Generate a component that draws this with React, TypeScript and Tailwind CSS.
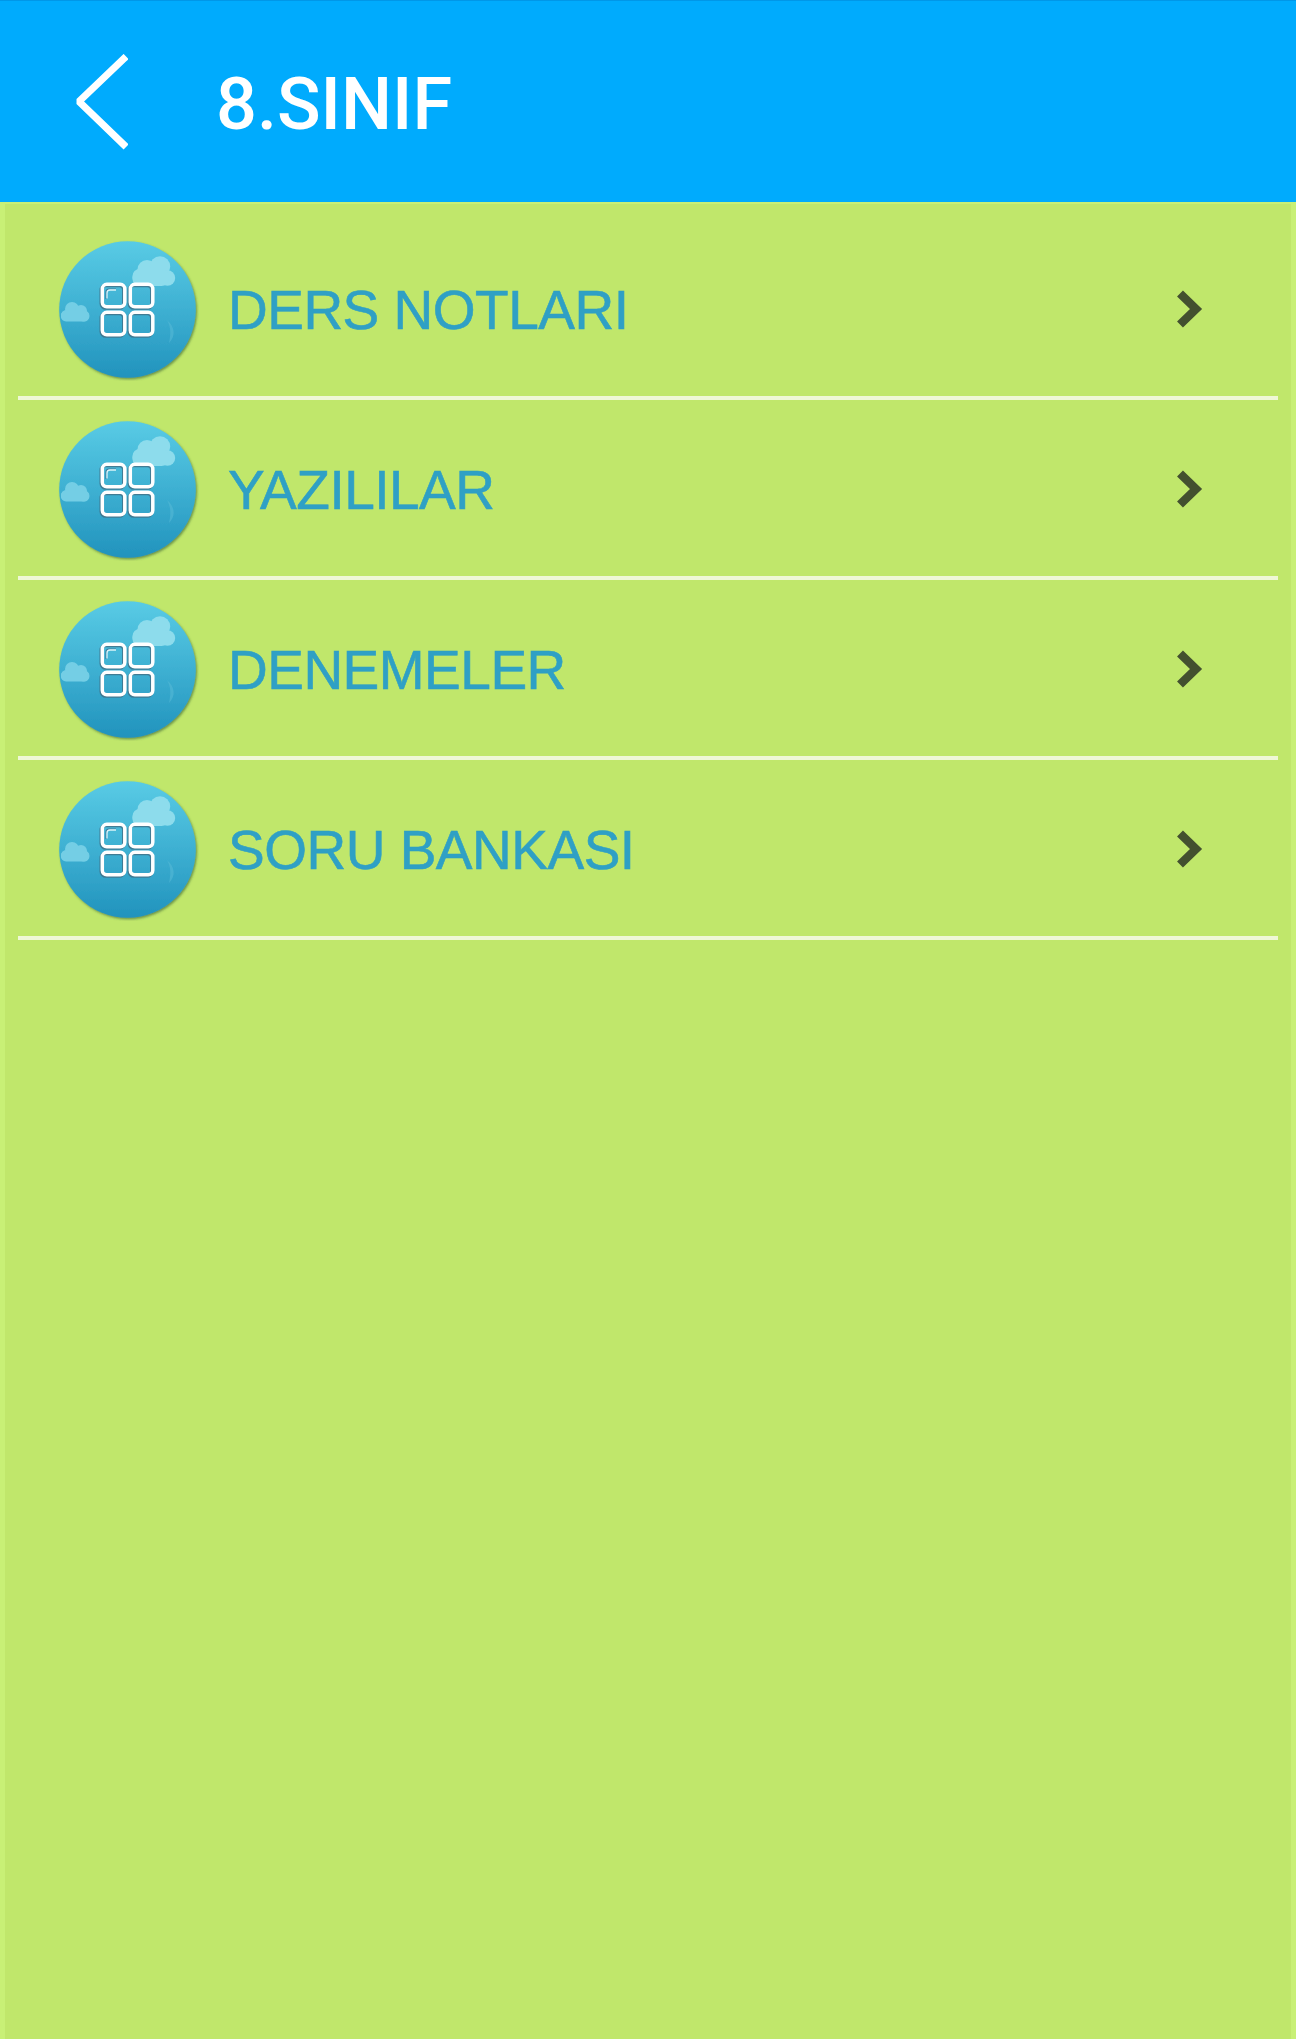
const items = ["DERS NOTLARI", "YAZILILAR", "DENEMELER", "SORU BANKASI"];

function BackIcon() {
  return (
    <svg width="56" height="96" viewBox="0 0 56 96" fill="none">
      <path
        d="M51.500 5L7 47.500L51.500 90.500"
        stroke="white"
        strokeWidth="7.200"
        strokeLinecap="square"
        strokeLinejoin="bevel"
      />
    </svg>
  );
}

function GridIcon() {
  return (
    <svg width="144" height="144" viewBox="0 0 144 144" fill="none" className="block shrink-0">
      <defs>
        <linearGradient id="sky" x1="0" y1="0" x2="0" y2="1">
          <stop offset="0" stopColor="#58cbe5" />
          <stop offset="0.5" stopColor="#3eb0d2" />
          <stop offset="1" stopColor="#2193bd" />
        </linearGradient>
        <filter id="drop" x="-10%" y="-10%" width="125%" height="125%">
          <feDropShadow dx="1.2" dy="1.5" stdDeviation="1.3" floodColor="#335c30" floodOpacity="0.6" />
        </filter>
      </defs>
      <circle cx="72.500" cy="72.500" r="68.300" fill="url(#sky)" filter="url(#drop)" />

      {/* Clouds */}
      <g fill="#8ddcec" transform="translate(1 1)">
        <circle cx="85" cy="39.500" r="8.500" />
        <circle cx="91" cy="31.500" r="9.500" />
        <circle cx="104" cy="28.500" r="10.200" />
        <circle cx="111.500" cy="40" r="7.700" />
        <rect x="76.500" y="31" width="36" height="17" rx="7" />
      </g>
      <g fill="#74cee5" transform="translate(1 0.5)">
        <circle cx="10.500" cy="78" r="5.500" />
        <circle cx="16" cy="71.500" r="7" />
        <circle cx="25" cy="73.500" r="6" />
        <circle cx="28" cy="78.500" r="5.500" />
        <rect x="5" y="73" width="28" height="11" rx="5" />
      </g>
      <path d="M112 83c8 7 9 16 2 23c2-9 2-16-2-23z" fill="#55b9d6" fillOpacity="0.6" />

      {/* Tiles, with a soft shade behind the white frames */}
      <g stroke="#416e85" strokeOpacity="0.8" strokeWidth="3.600">
        <rect x="46.300" y="48.500" width="22.500" height="22.500" rx="4.500" />
        <rect x="74.300" y="48.500" width="22.500" height="22.500" rx="4.500" />
        <rect x="46.300" y="76.500" width="22.500" height="22.500" rx="4.500" />
        <rect x="74.300" y="76.500" width="22.500" height="22.500" rx="4.500" />
      </g>
      <g stroke="white" strokeWidth="3.500">
        <rect x="47.300" y="47.300" width="22.500" height="22.500" rx="4.500" />
        <rect x="75.300" y="47.300" width="22.500" height="22.500" rx="4.500" />
        <rect x="47.300" y="75.300" width="22.500" height="22.500" rx="4.500" />
        <rect x="75.300" y="75.300" width="22.500" height="22.500" rx="4.500" />
      </g>
      <path d="M51 62V55Q51 52 54 52H61" stroke="#41799a" strokeWidth="1.200" />
      <path d="M52 61.500V56Q52 53 55 53H61" stroke="#d9f3f8" strokeWidth="1.300" />
    </svg>
  );
}

function ArrowIcon() {
  return (
    <svg width="32" height="44" viewBox="0 0 32 44" fill="none" className="block">
      <path d="M6 6.500L22 22L6 37.500" stroke="#43502f" strokeWidth="8.500" />
    </svg>
  );
}

export default function App() {
  return (
    <div className="flex h-[2039px] w-[1296px] flex-col overflow-hidden bg-[#c0e76b]">
      <header className="flex h-[202px] shrink-0 items-center border-t border-[#0097e8] bg-[#00abfd] pl-[72px]">
        <BackIcon />
        <h1 className="pl-[88px] pt-[7px] font-['Roboto'] text-[72px] font-medium leading-none text-white">8.SINIF</h1>
      </header>

      <main className="flex-1 border-x-[5px] border-t-2 border-[#c8f076] px-[13px] pt-4">
        {items.map((item) => (
          <div key={item} className="flex h-[180px] items-center border-b-4 border-[#eff8d7] pl-[37px] pr-[72px]">
            <div className="pt-[2px]">
              <GridIcon />
            </div>
            <span className="flex-1 pl-[29px] pt-1 font-['Liberation_Sans',sans-serif] text-[55px] leading-none tracking-[-0.5px] text-[#2fa0c5] [-webkit-text-stroke:0.6px_#2fa0c5]">
              {item}
            </span>
            <div className="pt-[2px]">
              <ArrowIcon />
            </div>
          </div>
        ))}
      </main>
    </div>
  );
}
